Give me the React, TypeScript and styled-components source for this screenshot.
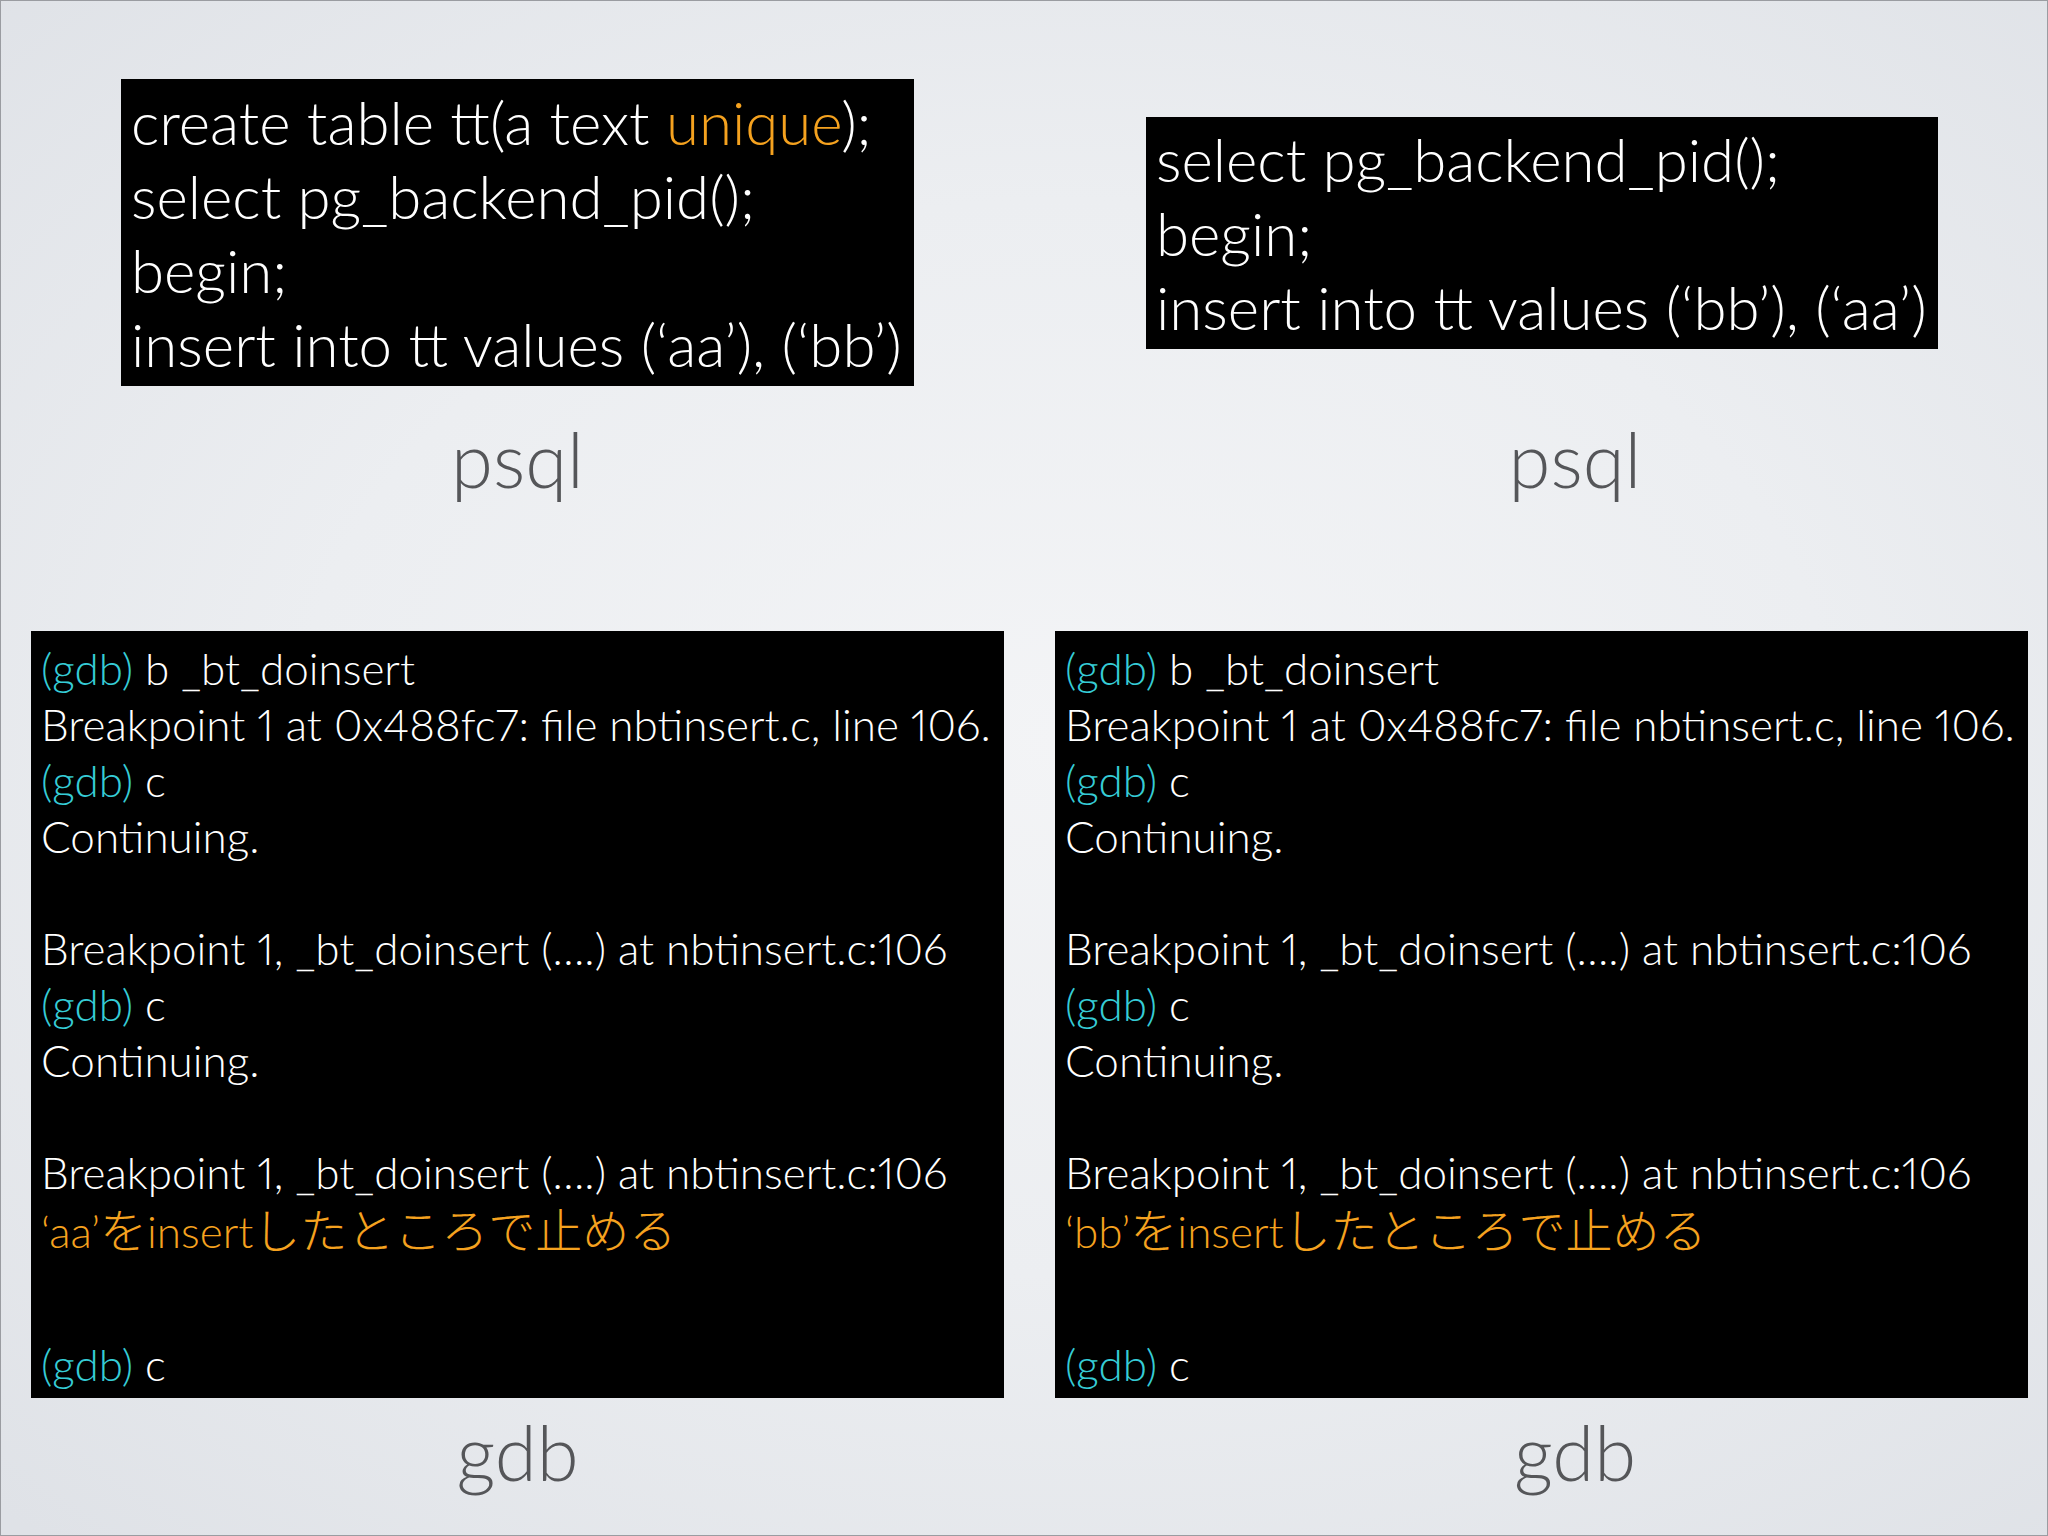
import React from "react";
import styled, { createGlobalStyle } from "styled-components";

const Global = createGlobalStyle`
  html, body { margin: 0; padding: 0; }
  body { background: #e4e6ea; }
`;

const Page = styled.div`
  box-sizing: border-box;
  width: 2048px;
  height: 1536px;
  padding: 76px 20px 0 30px;
  border: 1px solid #9a9ca1;
  background: radial-gradient(ellipse 75% 70% at 52% 48%, #f3f4f6 0%, #eceef1 50%, #dfe2e7 100%);
  font-family: "Lato", "Noto Sans CJK JP", sans-serif;
  font-weight: 300;
  overflow: hidden;
`;

const Grid = styled.div`
  display: grid;
  grid-template-columns: 973px 974px;
  grid-template-rows: 311px 243px 767px auto;
  column-gap: 51px;
`;

const Cell = styled.div`
  display: flex;
  align-items: center;
  justify-content: center;
`;

const Terminal = styled.div<{ $w: number; $size: "big" | "small"; $h?: number; $pt: number }>`
  box-sizing: border-box;
  width: ${(p) => p.$w}px;
  ${(p) => (p.$h ? `height: ${p.$h}px;` : "")}
  background: #000;
  color: #fff;
  font-size: ${(p) => (p.$size === "big" ? 60 : 44)}px;
  line-height: ${(p) => (p.$size === "big" ? 74 : 56)}px;
  padding: ${(p) => p.$pt}px 9px 5px 10px;
  white-space: pre;
  font-variant-numeric: proportional-nums;
  font-feature-settings: "pnum" 1;
`;

const Line = styled.div<{ $gap?: number }>`
  margin-top: ${(p) => p.$gap ?? 0}px;
  min-height: 1em;
`;

const Prompt = styled.span`
  color: #36ccd6;
`;

const Hl = styled.span`
  color: #f5a21f;
`;

const Jp = styled.span`
  font-family: "Noto Sans CJK JP", sans-serif;
  font-weight: 300;
  font-size: 47px;
`;

const Label = styled.div<{ $shift?: number; $pad: number }>`
  text-align: center;
  padding-top: ${(p) => p.$pad}px;
  padding-left: ${(p) => (p.$shift ?? 0) * 2}px;
  font-size: 76px;
  line-height: 76px;
  color: #555659;
  font-weight: 300;
`;

const GdbSession: React.FC<{ val: string }> = ({ val }) => (
  <Terminal $w={973} $h={767} $size="small" $pt={9}>
    <Line><Prompt>(gdb)</Prompt> b _bt_doinsert</Line>
    <Line>Breakpoint 1 at 0x488fc7: file nbtinsert.c, line 106.</Line>
    <Line><Prompt>(gdb)</Prompt> c</Line>
    <Line>Continuing.</Line>
    <Line> </Line>
    <Line>Breakpoint 1, _bt_doinsert (….) at nbtinsert.c:106</Line>
    <Line><Prompt>(gdb)</Prompt> c</Line>
    <Line>Continuing.</Line>
    <Line> </Line>
    <Line>Breakpoint 1, _bt_doinsert (….) at nbtinsert.c:106</Line>
    <Line><Hl>‘{val}’<Jp>を</Jp>insert<Jp>したところで止める</Jp></Hl></Line>
    <Line> </Line>
    <Line $gap={21}><Prompt>(gdb)</Prompt> c</Line>
  </Terminal>
);

export default function App() {
  return (
    <>
      <Global />
      <Page>
        <Grid>
          <Cell>
            <Terminal $w={793} $size="big" $pt={6}>
              <Line>create table tt(a text <Hl>unique</Hl>);</Line>
              <Line>select pg_backend_pid();</Line>
              <Line>begin;</Line>
              <Line>insert into tt values (‘aa’), (‘bb’)</Line>
            </Terminal>
          </Cell>
          <Cell>
            <Terminal $w={792} $size="big" $pt={5}>
              <Line>select pg_backend_pid();</Line>
              <Line>begin;</Line>
              <Line>insert into tt values (‘bb’), (‘aa’)</Line>
            </Terminal>
          </Cell>
          <Label $pad={33}>psql</Label>
          <Label $pad={33} $shift={33}>psql</Label>
          <GdbSession val="aa" />
          <GdbSession val="bb" />
          <Label $pad={16}>gdb</Label>
          <Label $pad={16} $shift={33}>gdb</Label>
        </Grid>
      </Page>
    </>
  );
}
